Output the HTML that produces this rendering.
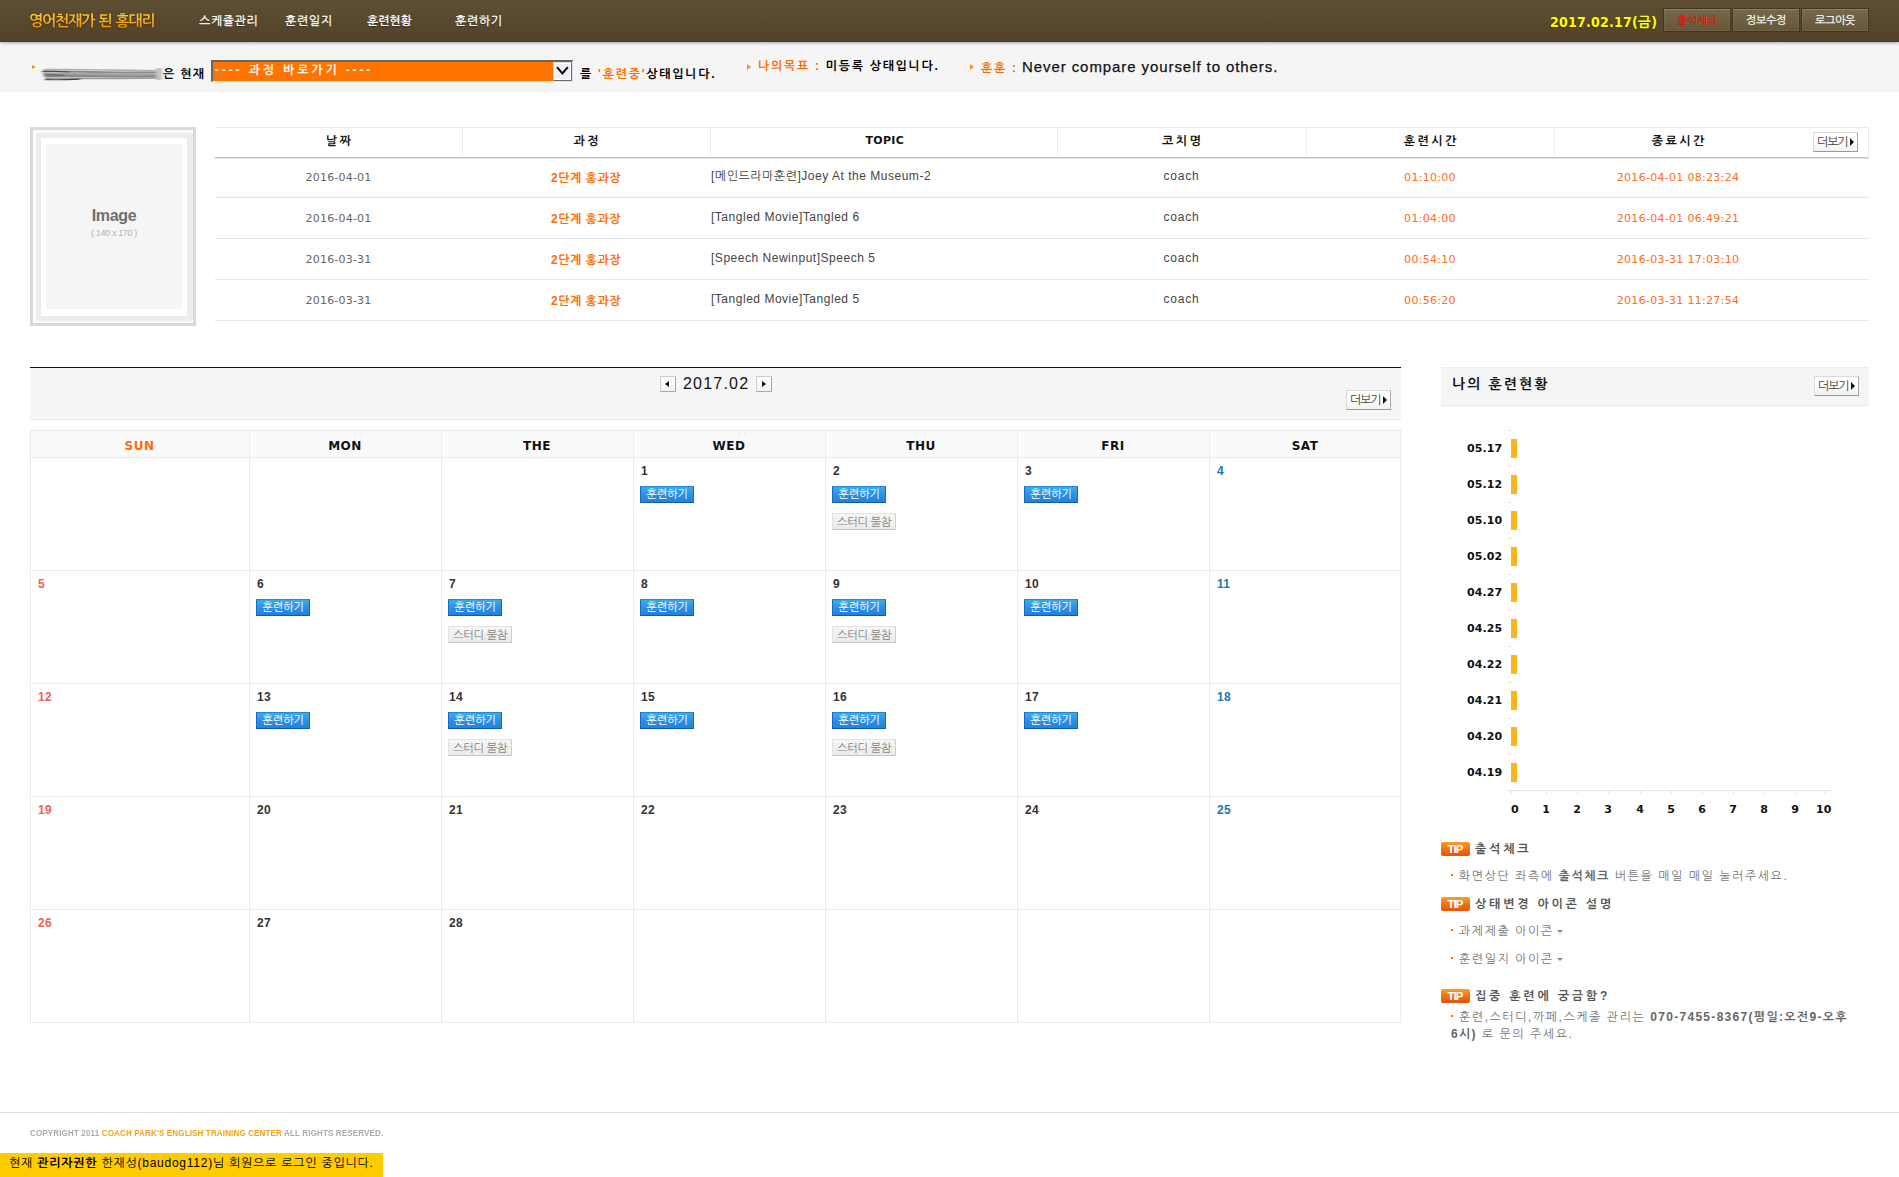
<!DOCTYPE html>
<html lang="ko">
<head>
<meta charset="utf-8">
<title>영어천재가 된 홍대리</title>
<style>
*{margin:0;padding:0;box-sizing:border-box}
html,body{width:1899px;height:1177px;overflow:hidden;background:#fff}
body{position:relative;font-family:"Liberation Sans","NanumGothic","Noto Sans CJK KR",sans-serif;font-size:12px;color:#333}
.abs{position:absolute;white-space:nowrap}
.ko{font-family:"Liberation Sans","NanumGothic","Noto Sans CJK KR",sans-serif}
.vd{font-family:"DejaVu Sans","NanumGothic",sans-serif}
/* header */
#hd{position:absolute;left:0;top:0;width:1899px;height:42px;background:linear-gradient(#5e4f33,#50432a);border-bottom:1px solid #4b3c22;box-shadow:0 1px 3px rgba(0,0,0,.32)}
.nav{top:13px;color:#fff;font-size:12px;line-height:16px}
.hbtn{position:absolute;top:8px;height:24px;width:68px;border:1px solid #41361f;background:linear-gradient(#77684a,#66573a);-webkit-text-stroke:.2px;color:#fff;font-size:11px;line-height:23px;letter-spacing:-.3px;text-align:center;box-shadow:inset 0 1px 0 rgba(255,255,255,.12),inset 0 0 0 1px rgba(255,255,255,.05)}
#bar{position:absolute;left:0;top:42px;width:1899px;height:50px;background:#f5f5f5}

#logo{left:29px;top:10px;font-weight:bold;line-height:22px;font-size:15px;letter-spacing:-1.05px;word-spacing:1px;background:linear-gradient(#ffc928 20%,#f08a00 85%);-webkit-background-clip:text;background-clip:text;color:transparent;filter:drop-shadow(0 1px 1px rgba(40,25,0,.45))}
.nav{letter-spacing:.6px;-webkit-text-stroke:.3px #fff;text-shadow:0 1px 1px rgba(0,0,0,.35)}
.b12{font-size:12px;line-height:14px;color:#000;font-weight:bold}
.or{color:#ff6c00}
.tri{position:absolute;width:0;height:0;border-style:solid;border-color:transparent}
#sel{position:absolute;left:211px;top:60px;width:362px;height:22px;background:#ff7300;border:solid;border-width:2px 1px 1px 2px;border-color:#666 #e2e5e8 #e2e5e8 #666}
#sel .t{position:absolute;left:2px;top:1px;color:#fff;font-weight:bold;font-size:12px;line-height:14px;letter-spacing:2.85px;white-space:nowrap}
#sel .dd{position:absolute;right:0;top:0;width:19px;height:19px;background:#f0f0f0;border:1px solid;border-color:#ddd #6b6b6b #6b6b6b #ddd;box-shadow:inset 0 0 0 1px #fff}

#pf{position:absolute;left:30px;top:127px;width:166px;height:199px;border:3px solid #dcd9d3;background:#fff}
#pf .i1{position:absolute;left:3px;top:3px;width:156.5px;height:187.8px;background:#ececec}
#pf .i2{position:absolute;left:8px;top:8px;width:146.2px;height:178px;background:#fff}
#pf .i3{position:absolute;left:13px;top:13.7px;width:136px;height:165.3px;background:#f5f5f5}
#tb{position:absolute;left:215px;top:127px;width:1654px;height:194px}
#tb .hr{position:absolute;left:0;top:0;width:1654px;height:31px;border-top:1px solid #ebebeb;border-right:1px solid #ebebeb;border-bottom:1px solid #c6c6c6;box-shadow:0 1px 0 #e2e2e2}
#tb .vs{position:absolute;top:1px;width:1px;height:28px;background:#efefef}
#tb .rl{position:absolute;left:0;width:1654px;height:1px;background:#e4e4e4}
.th{position:absolute;top:6px;font-weight:bold;color:#111;font-size:12px;line-height:16px;text-align:center;letter-spacing:2.5px;text-indent:2.5px}
.td{position:absolute;text-align:center;font-size:11px;line-height:14px;white-space:nowrap}
.more{position:absolute;width:45px;height:20px;border:1px solid #dadada;border-bottom-color:#9a9a9a;border-right-color:#a8a8a8;background:linear-gradient(#fff 40%,#f1f1f1);font-size:12px;line-height:19px;color:#4a4035;padding-left:3px;letter-spacing:-1.1px;white-space:nowrap}
.more:after{content:"";position:absolute;right:3px;top:5px;border:solid transparent;border-width:4px 0 4px 4.5px;border-left-color:#111}

#calhd{position:absolute;left:30px;top:367px;width:1371px;height:53px;background:#f5f5f5;border-top:1px solid #111;border-bottom:1px solid #e9e9e9}
.nb{position:absolute;top:376px;width:16px;height:16px;border:1px solid #ccc;border-right-color:#aaa;border-bottom-color:#aaa;background:linear-gradient(#fff,#f2f2f2)}
.nb i{position:absolute;top:4px;border:solid transparent;border-width:3.5px 0}
#cal{position:absolute;left:30px;top:430px;width:1371px;height:593px;border:1px solid #ebebeb;background:#fff}
#cal .hd{position:absolute;left:0;top:0;width:1369px;height:27px;background:#fafafa;border-bottom:1px solid #ebebeb}
#cal .v{position:absolute;top:0;width:1px;height:591px;background:#ebebeb}
#cal .h{position:absolute;left:0;width:1369px;height:1px;background:#ebebeb}
.dn{position:absolute;font:bold 12px/14px 'DejaVu Sans',sans-serif;color:#111;text-align:center;top:8px;letter-spacing:.5px}
.d{position:absolute;font:bold 12px/14px "Liberation Sans",sans-serif;color:#333;letter-spacing:.3px}
.bt{position:absolute;width:54px;height:17px;background:linear-gradient(#3caae9,#2a90e0 55%,#2382db);border:1px solid;border-color:#2088d4 #1868c4 #0e5ab4 #1868c4;color:#fff;font-size:11.5px;line-height:14px;text-align:center;letter-spacing:-.45px;white-space:nowrap}
.st{position:absolute;width:64px;height:17px;background:linear-gradient(#f6f6f6,#eaeaea);border:1px solid #e2e2e2;border-bottom-color:#c6c6c6;border-right-color:#cfcfcf;color:#858585;font-size:11.5px;line-height:16px;text-align:center;letter-spacing:-.5px;white-space:nowrap}

#rp{position:absolute;left:1441px;top:367px;width:428px;height:39px;background:#f5f5f5;border-top:1px solid #ececec;border-bottom:1px solid #e9e9e9}
.cl{position:absolute;left:1467px;font:bold 11px/14px 'DejaVu Sans',sans-serif;color:#111;letter-spacing:.1px}
.cb{position:absolute;left:1511px;width:6px;height:19px;background:#fdb515}
.ct{position:absolute;left:1508px;width:3px;height:1px;background:#e4e4dc}
.ax{position:absolute;font:bold 11px/14px 'DejaVu Sans',sans-serif;color:#111;top:803px}
.tip{position:absolute;left:1441px;width:29px;height:14px;border-radius:2px;background:linear-gradient(#f9a02a,#ee6f12 55%,#e4540a);color:#fff;font:bold 11.5px/15px 'Liberation Sans',sans-serif;text-align:center;letter-spacing:-.9px;text-indent:-1px}
.tt{position:absolute;left:1475px;font-weight:bold;font-size:12px;line-height:14px;color:#555;letter-spacing:2.8px;white-space:nowrap}
.tl{position:absolute;left:1451px;font-size:12px;line-height:17px;color:#777;letter-spacing:1.55px}
.tl b{color:#666}
.dot{display:inline-block;width:2px;height:2px;background:#ff6c00;vertical-align:middle;margin:0 6px 3px 0}
.car{display:inline-block;border:solid transparent;border-width:3px 3px 0;border-top-color:#888;vertical-align:middle;margin-left:3px}
#ft{position:absolute;left:0;top:1112px;width:1899px;height:1px;background:#ddd}
#cp{left:30px;top:1128px;font:bold 9.5px/10px 'Liberation Sans',sans-serif;color:#aaa;letter-spacing:.2px;transform-origin:0 0;transform:scaleX(.84)}
#cp span{color:#f5a11a}
#yb{position:absolute;left:0;top:1153px;width:383px;height:24px;background:#ffcc00}
#yb div{position:absolute;left:9px;top:2px;font-size:12px;line-height:16px;color:#000;white-space:nowrap;letter-spacing:.75px}
</style>
</head>
<body>
<div id="bar"></div>
<div id="hd"></div>
<div class="abs ko" id="logo">영어천재가 된 홍대리</div>
<div class="abs ko nav" style="left:199px">스케쥴관리</div>
<div class="abs ko nav" style="left:285px">훈련일지</div>
<div class="abs ko nav" style="left:367px;font-weight:bold;letter-spacing:-.1px;-webkit-text-stroke:0">훈련현황</div>
<div class="abs ko nav" style="left:455px">훈련하기</div>
<div class="abs" id="date" style="left:1550px;top:12px;font:bold 14px/20px 'DejaVu Sans Condensed','DejaVu Sans','NanumGothic',sans-serif;font-stretch:condensed;letter-spacing:.22px;color:#ffff00;text-shadow:0 1px 1px rgba(60,40,0,.6)">2017.02.17(금)</div>
<div class="hbtn ko" style="left:1663px;color:#f00">출석체크</div>
<div class="hbtn ko" style="left:1732px">정보수정</div>
<div class="hbtn ko" style="left:1801px">로그아웃</div>

<div class="tri" style="left:32px;top:65px;border-width:2.5px 0 2.5px 4px;border-left-color:#fb9600"></div>
<svg class="abs" style="left:40px;top:64px" width="126" height="20" viewBox="0 0 126 20"><defs><filter id="bl" x="-5%" y="-30%" width="110%" height="160%"><feGaussianBlur stdDeviation="1.6 0.55"/></filter></defs><g filter="url(#bl)" fill="none" stroke-linecap="butt"><path d="M4 5.6 C40 5,80 6.4,119 6.8" stroke="#b0b0b0" stroke-width="1.6"/><path d="M2 7.6 C30 7.2,70 8.6,121 8.6" stroke="#8c8c8c" stroke-width="2"/><path d="M3 9.8 C40 9.6,80 10.6,121 10.4" stroke="#a4a4a4" stroke-width="2.2"/><path d="M4 12 C40 11.6,70 12.6,121 12.2" stroke="#8a8a8a" stroke-width="2.2"/><path d="M5 14.2 C40 14.6,80 14.4,119 13.8" stroke="#9c9c9c" stroke-width="1.8"/><path d="M5 15.6 C20 16,30 15.6,40 15.2" stroke="#444" stroke-width="1.2"/><path d="M2 7.4 C12 7,20 7.6,30 8" stroke="#444" stroke-width="1"/><path d="M4 10.8 C10 10.6,16 11,24 11.2" stroke="#555" stroke-width="1"/><path d="M116 5 L121 5 L121 15 L116 15" stroke="#b5b5b5" stroke-width="1.4" fill="#c4c4c4"/></g></svg>
<div class="abs ko b12" style="left:163px;top:67px;letter-spacing:1.3px">은 현재</div>
<div id="sel"><div class="t ko">---- 과정 바로가기 ----</div><div class="dd"><svg width="17" height="17" viewBox="0 0 17 17" style="position:absolute;left:0;top:0"><path d="M3 4.2 L8.4 10.4 L13.8 4.2" fill="none" stroke="#05051a" stroke-width="2"/></svg></div></div>
<div class="abs ko b12" style="left:580px;top:67px;letter-spacing:1.72px">를&nbsp;<span class="or">'훈련중'</span>상태입니다.</div>
<div class="tri" style="left:747px;top:64px;border-width:3px 0 3px 4px;border-left-color:#f7941d"></div>
<div class="abs ko b12" style="left:758px;top:59px;letter-spacing:1.7px"><span class="or">나의목표 :</span> 미등록 상태입니다.</div>
<div class="tri" style="left:970px;top:64px;border-width:3px 0 3px 4px;border-left-color:#f7941d"></div>
<div class="abs ko b12" style="left:981px;top:61px;letter-spacing:1.7px"><span class="or">훈훈 :</span></div>
<div class="abs" id="quote" style="left:1022px;top:58px;font-size:15px;line-height:18px;color:#111;-webkit-text-stroke:.25px #111;letter-spacing:.92px;font-family:'Liberation Sans',sans-serif">Never compare yourself to others.</div>
<div id="pf"><div class="i1"></div><div class="i2"></div><div class="i3"></div>
<div class="abs" style="left:0;width:160px;top:76px;text-align:center;font:bold 16px/20px 'Liberation Sans',sans-serif;color:#6e6e6e;letter-spacing:-.3px;text-indent:2px">Image</div>
<div class="abs" style="left:0;width:160px;top:98px;text-align:center;font:9px/11px 'Liberation Sans',sans-serif;color:#b4b4b4;letter-spacing:-.35px;text-indent:2px">( 140 x 170 )</div></div>
<div id="tb"><div class="hr"></div>
<div class="th ko" style="left:0px;width:247px;">날짜</div>
<div class="vs" style="left:247px"></div><div class="th ko" style="left:247px;width:248px;">과정</div>
<div class="vs" style="left:495px"></div><div class="th ko" style="left:495px;width:347px;font-family:'DejaVu Sans',sans-serif;font-size:11px;letter-spacing:.3px">TOPIC</div>
<div class="vs" style="left:842px"></div><div class="th ko" style="left:842px;width:249px;">코치명</div>
<div class="vs" style="left:1091px"></div><div class="th ko" style="left:1091px;width:248px;">훈련시간</div>
<div class="vs" style="left:1339px"></div><div class="th ko" style="left:1339px;width:248px;">종료시간</div>
<div class="more ko" style="left:1598px;top:5px">더보기</div>
<div class="rl" style="top:70px"></div>
<div class="td vd" style="left:0;width:247px;top:44px;color:#666;letter-spacing:.2px">2016-04-01</div><div class="td ko" style="left:247px;width:248px;top:44px;color:#ff6c00;font-weight:bold;font-size:12px;letter-spacing:.5px">2단계 홍과장</div><div class="td ko" style="left:496px;text-align:left;top:42px;color:#444;font-size:12px;letter-spacing:.52px">[메인드라마훈련]Joey At the Museum-2</div><div class="td ko" style="left:842px;width:249px;top:42px;color:#444;font-size:12px;letter-spacing:.8px">coach</div><div class="td vd" style="left:1091px;width:248px;top:44px;color:#ff6c1a;letter-spacing:.3px">01:10:00</div><div class="td vd" style="left:1339px;width:248px;top:44px;color:#ff6c1a;letter-spacing:.3px">2016-04-01 08:23:24</div>
<div class="rl" style="top:111px"></div>
<div class="td vd" style="left:0;width:247px;top:85px;color:#666;letter-spacing:.2px">2016-04-01</div><div class="td ko" style="left:247px;width:248px;top:85px;color:#ff6c00;font-weight:bold;font-size:12px;letter-spacing:.5px">2단계 홍과장</div><div class="td ko" style="left:496px;text-align:left;top:83px;color:#444;font-size:12px;letter-spacing:.52px">[Tangled Movie]Tangled 6</div><div class="td ko" style="left:842px;width:249px;top:83px;color:#444;font-size:12px;letter-spacing:.8px">coach</div><div class="td vd" style="left:1091px;width:248px;top:85px;color:#ff6c1a;letter-spacing:.3px">01:04:00</div><div class="td vd" style="left:1339px;width:248px;top:85px;color:#ff6c1a;letter-spacing:.3px">2016-04-01 06:49:21</div>
<div class="rl" style="top:152px"></div>
<div class="td vd" style="left:0;width:247px;top:126px;color:#666;letter-spacing:.2px">2016-03-31</div><div class="td ko" style="left:247px;width:248px;top:126px;color:#ff6c00;font-weight:bold;font-size:12px;letter-spacing:.5px">2단계 홍과장</div><div class="td ko" style="left:496px;text-align:left;top:124px;color:#444;font-size:12px;letter-spacing:.52px">[Speech Newinput]Speech 5</div><div class="td ko" style="left:842px;width:249px;top:124px;color:#444;font-size:12px;letter-spacing:.8px">coach</div><div class="td vd" style="left:1091px;width:248px;top:126px;color:#ff6c1a;letter-spacing:.3px">00:54:10</div><div class="td vd" style="left:1339px;width:248px;top:126px;color:#ff6c1a;letter-spacing:.3px">2016-03-31 17:03:10</div>
<div class="rl" style="top:193px"></div>
<div class="td vd" style="left:0;width:247px;top:167px;color:#666;letter-spacing:.2px">2016-03-31</div><div class="td ko" style="left:247px;width:248px;top:167px;color:#ff6c00;font-weight:bold;font-size:12px;letter-spacing:.5px">2단계 홍과장</div><div class="td ko" style="left:496px;text-align:left;top:165px;color:#444;font-size:12px;letter-spacing:.52px">[Tangled Movie]Tangled 5</div><div class="td ko" style="left:842px;width:249px;top:165px;color:#444;font-size:12px;letter-spacing:.8px">coach</div><div class="td vd" style="left:1091px;width:248px;top:167px;color:#ff6c1a;letter-spacing:.3px">00:56:20</div><div class="td vd" style="left:1339px;width:248px;top:167px;color:#ff6c1a;letter-spacing:.3px">2016-03-31 11:27:54</div>
</div>
<div id="calhd"></div>
<div class="nb" style="left:660px"><i style="left:4px;border-right:4px solid #111"></i></div><div class="abs ko" id="ym" style="left:683px;top:375px;font-family:'Liberation Sans',sans-serif;font-size:16px;line-height:18px;color:#111;letter-spacing:1.2px">2017.02</div><div class="nb" style="left:756px"><i style="left:5px;border-left:4px solid #111"></i></div>
<div class="more ko" style="left:1346px;top:390px">더보기</div>
<div id="cal"><div class="hd"></div>
<div class="v" style="left:218px"></div><div class="v" style="left:410px"></div><div class="v" style="left:602px"></div><div class="v" style="left:794px"></div><div class="v" style="left:986px"></div><div class="v" style="left:1178px"></div><div class="h" style="top:139px"></div><div class="h" style="top:252px"></div><div class="h" style="top:365px"></div><div class="h" style="top:478px"></div>
<div class="dn" style="left:-1px;width:219px;color:#ff6c00">SUN</div><div class="dn" style="left:218px;width:192px;color:#111">MON</div><div class="dn" style="left:410px;width:192px;color:#111">THE</div><div class="dn" style="left:602px;width:192px;color:#111">WED</div><div class="dn" style="left:794px;width:192px;color:#111">THU</div><div class="dn" style="left:986px;width:192px;color:#111">FRI</div><div class="dn" style="left:1178px;width:192px;color:#111">SAT</div>
<div class="d" style="left:610px;top:33px;color:#333">1</div><div class="bt ko" style="left:609px;top:55px">훈련하기</div><div class="d" style="left:802px;top:33px;color:#333">2</div><div class="bt ko" style="left:801px;top:55px">훈련하기</div><div class="st ko" style="left:801px;top:82px">스터디 불참</div><div class="d" style="left:994px;top:33px;color:#333">3</div><div class="bt ko" style="left:993px;top:55px">훈련하기</div><div class="d" style="left:1186px;top:33px;color:#1b75bc">4</div>
<div class="d" style="left:7px;top:146px;color:#f0624d">5</div><div class="d" style="left:226px;top:146px;color:#333">6</div><div class="bt ko" style="left:225px;top:168px">훈련하기</div><div class="d" style="left:418px;top:146px;color:#333">7</div><div class="bt ko" style="left:417px;top:168px">훈련하기</div><div class="st ko" style="left:417px;top:195px">스터디 불참</div><div class="d" style="left:610px;top:146px;color:#333">8</div><div class="bt ko" style="left:609px;top:168px">훈련하기</div><div class="d" style="left:802px;top:146px;color:#333">9</div><div class="bt ko" style="left:801px;top:168px">훈련하기</div><div class="st ko" style="left:801px;top:195px">스터디 불참</div><div class="d" style="left:994px;top:146px;color:#333">10</div><div class="bt ko" style="left:993px;top:168px">훈련하기</div><div class="d" style="left:1186px;top:146px;color:#1b75bc">11</div>
<div class="d" style="left:7px;top:259px;color:#f0624d">12</div><div class="d" style="left:226px;top:259px;color:#333">13</div><div class="bt ko" style="left:225px;top:281px">훈련하기</div><div class="d" style="left:418px;top:259px;color:#333">14</div><div class="bt ko" style="left:417px;top:281px">훈련하기</div><div class="st ko" style="left:417px;top:308px">스터디 불참</div><div class="d" style="left:610px;top:259px;color:#333">15</div><div class="bt ko" style="left:609px;top:281px">훈련하기</div><div class="d" style="left:802px;top:259px;color:#333">16</div><div class="bt ko" style="left:801px;top:281px">훈련하기</div><div class="st ko" style="left:801px;top:308px">스터디 불참</div><div class="d" style="left:994px;top:259px;color:#333">17</div><div class="bt ko" style="left:993px;top:281px">훈련하기</div><div class="d" style="left:1186px;top:259px;color:#1b75bc">18</div>
<div class="d" style="left:7px;top:372px;color:#f0624d">19</div><div class="d" style="left:226px;top:372px;color:#333">20</div><div class="d" style="left:418px;top:372px;color:#333">21</div><div class="d" style="left:610px;top:372px;color:#333">22</div><div class="d" style="left:802px;top:372px;color:#333">23</div><div class="d" style="left:994px;top:372px;color:#333">24</div><div class="d" style="left:1186px;top:372px;color:#1b75bc">25</div>
<div class="d" style="left:7px;top:485px;color:#f0624d">26</div><div class="d" style="left:226px;top:485px;color:#333">27</div><div class="d" style="left:418px;top:485px;color:#333">28</div>
</div>
<div id="rp"></div>
<div class="abs ko" style="left:1452px;top:375px;font-weight:bold;font-size:14px;line-height:18px;color:#111;letter-spacing:2.1px">나의 훈련현황</div>
<div class="more ko" style="left:1814px;top:376px">더보기</div>
<div class="ct" style="top:430px"></div><div class="cl" style="top:442px">05.17</div><div class="cb" style="top:439px"></div>
<div class="ct" style="top:466px"></div><div class="cl" style="top:478px">05.12</div><div class="cb" style="top:475px"></div>
<div class="ct" style="top:502px"></div><div class="cl" style="top:514px">05.10</div><div class="cb" style="top:511px"></div>
<div class="ct" style="top:538px"></div><div class="cl" style="top:550px">05.02</div><div class="cb" style="top:547px"></div>
<div class="ct" style="top:574px"></div><div class="cl" style="top:586px">04.27</div><div class="cb" style="top:583px"></div>
<div class="ct" style="top:610px"></div><div class="cl" style="top:622px">04.25</div><div class="cb" style="top:619px"></div>
<div class="ct" style="top:646px"></div><div class="cl" style="top:658px">04.22</div><div class="cb" style="top:655px"></div>
<div class="ct" style="top:682px"></div><div class="cl" style="top:694px">04.21</div><div class="cb" style="top:691px"></div>
<div class="ct" style="top:718px"></div><div class="cl" style="top:730px">04.20</div><div class="cb" style="top:727px"></div>
<div class="ct" style="top:754px"></div><div class="cl" style="top:766px">04.19</div><div class="cb" style="top:763px"></div>
<div style="position:absolute;left:1508px;top:790px;width:324px;height:1px;background:#e6e6dc"></div>
<div style="position:absolute;left:1511px;top:791px;width:1px;height:3px;background:#e6e6dc"></div><div class="ax" style="left:1511px">0</div><div style="position:absolute;left:1546px;top:791px;width:1px;height:3px;background:#e6e6dc"></div><div class="ax" style="left:1536px;width:20px;text-align:center">1</div><div style="position:absolute;left:1577px;top:791px;width:1px;height:3px;background:#e6e6dc"></div><div class="ax" style="left:1567px;width:20px;text-align:center">2</div><div style="position:absolute;left:1608px;top:791px;width:1px;height:3px;background:#e6e6dc"></div><div class="ax" style="left:1598px;width:20px;text-align:center">3</div><div style="position:absolute;left:1640px;top:791px;width:1px;height:3px;background:#e6e6dc"></div><div class="ax" style="left:1630px;width:20px;text-align:center">4</div><div style="position:absolute;left:1671px;top:791px;width:1px;height:3px;background:#e6e6dc"></div><div class="ax" style="left:1661px;width:20px;text-align:center">5</div><div style="position:absolute;left:1702px;top:791px;width:1px;height:3px;background:#e6e6dc"></div><div class="ax" style="left:1692px;width:20px;text-align:center">6</div><div style="position:absolute;left:1733px;top:791px;width:1px;height:3px;background:#e6e6dc"></div><div class="ax" style="left:1723px;width:20px;text-align:center">7</div><div style="position:absolute;left:1764px;top:791px;width:1px;height:3px;background:#e6e6dc"></div><div class="ax" style="left:1754px;width:20px;text-align:center">8</div><div style="position:absolute;left:1795px;top:791px;width:1px;height:3px;background:#e6e6dc"></div><div class="ax" style="left:1785px;width:20px;text-align:center">9</div><div style="position:absolute;left:1824px;top:791px;width:1px;height:3px;background:#e6e6dc"></div><div class="ax" style="left:1816px">10</div>
<div class="tip" style="top:842px">TIP</div><div class="tt ko" style="top:842px">출석체크</div>
<div class="tl ko abs" style="top:868px"><span class="dot"></span>화면상단 좌측에 <b>출석체크</b> 버튼을 매일 매일 눌러주세요.</div>
<div class="tip" style="top:897px">TIP</div><div class="tt ko" style="top:897px">상태변경 아이콘 설명</div>
<div class="tl ko abs" style="top:923px"><span class="dot"></span>과제제출 아이콘<span class="car"></span></div>
<div class="tl ko abs" style="top:951px"><span class="dot"></span>훈련일지 아이콘<span class="car"></span></div>
<div class="tip" style="top:989px">TIP</div><div class="tt ko" style="top:989px">집중 훈련에 궁금함?</div>
<div class="tl ko" style="top:1009px;white-space:nowrap"><span class="dot"></span>훈련,스터디,까페,스케줄 관리는 <b style="letter-spacing:1.3px">070-7455-8367(평일:오전9-오후<br>6시)</b> 로 문의 주세요.</div>
<div id="ft"></div>
<div class="abs" id="cp">COPYRIGHT 2011 <span>COACH PARK'S ENGLISH TRAINING CENTER</span> ALL RIGHTS RESERVED.</div>
<div id="yb"><div class="ko">현재 <b>관리자권한</b> 한재성(baudog112)님 회원으로 로그인 중입니다.</div></div>
</body>
</html>
